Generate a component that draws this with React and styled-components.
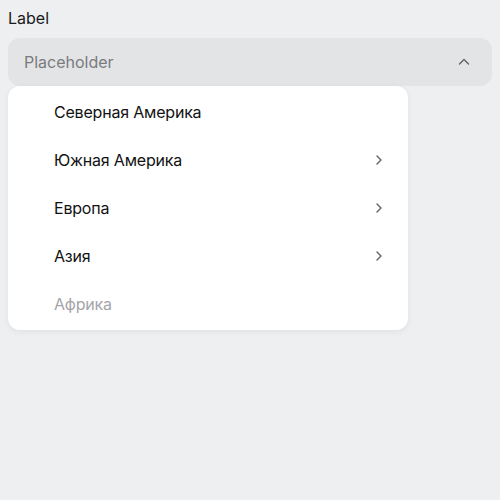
import React from "react";
import styled, { createGlobalStyle } from "styled-components";

const GlobalStyle = createGlobalStyle`
  body {
    margin: 0;
    background: #eeeff1;
    font-family: Inter, "Noto Sans", sans-serif;
    color: #000;
  }
`;

const Wrap = styled.div`
  padding: 8px;
  display: flex;
  flex-direction: column;
`;

const Label = styled.div`
  font-size: 16px;
  line-height: 20px;
  height: 22px;
  color: #1a1a1a;
`;

const Field = styled.div`
  margin-top: 8px;
  height: 48px;
  border-radius: 12px;
  background: #e3e4e6;
  display: flex;
  align-items: center;
  justify-content: space-between;
  padding: 0 20px 0 16px;
`;

const Placeholder = styled.span`
  font-size: 16px;
  color: #7a7b7e;
`;

const Menu = styled.ul`
  list-style: none;
  margin: 0;
  width: 400px;
  box-sizing: border-box;
  padding: 2px 0;
  background: #fff;
  border-radius: 12px;
  box-shadow: 0 2px 6px rgba(0, 0, 0, 0.06);
`;

const Item = styled.li`
  height: 48px;
  display: flex;
  align-items: center;
  justify-content: space-between;
  padding: 0 21px 0 46px;
  font-size: 16px;
  letter-spacing: -0.2px;
  color: ${(p) => (p.$disabled ? "#a4a5a8" : "#121212")};
`;

const Chevron = ({ dir }) => (
  <svg width="16" height="16" viewBox="0 0 16 16" fill="none">
    <path
      d={dir === "up" ? "M3.5 10 L8 5.5 L12.5 10" : "M6 4 L10 8 L6 12"}
      stroke="#626367"
      strokeWidth="1.4"
      strokeLinecap="round"
      strokeLinejoin="round"
    />
  </svg>
);

const items = [
  { name: "Северная Америка" },
  { name: "Южная Америка", sub: true },
  { name: "Европа", sub: true },
  { name: "Азия", sub: true },
  { name: "Африка", disabled: true },
];

export default function App() {
  return (
    <>
      <GlobalStyle />
      <Wrap>
        <Label>Label</Label>
        <Field>
          <Placeholder>Placeholder</Placeholder>
          <Chevron dir="up" />
        </Field>
        <Menu>
          {items.map((it) => (
            <Item key={it.name} $disabled={it.disabled}>
              {it.name}
              {it.sub && <Chevron dir="right" />}
            </Item>
          ))}
        </Menu>
      </Wrap>
    </>
  );
}
